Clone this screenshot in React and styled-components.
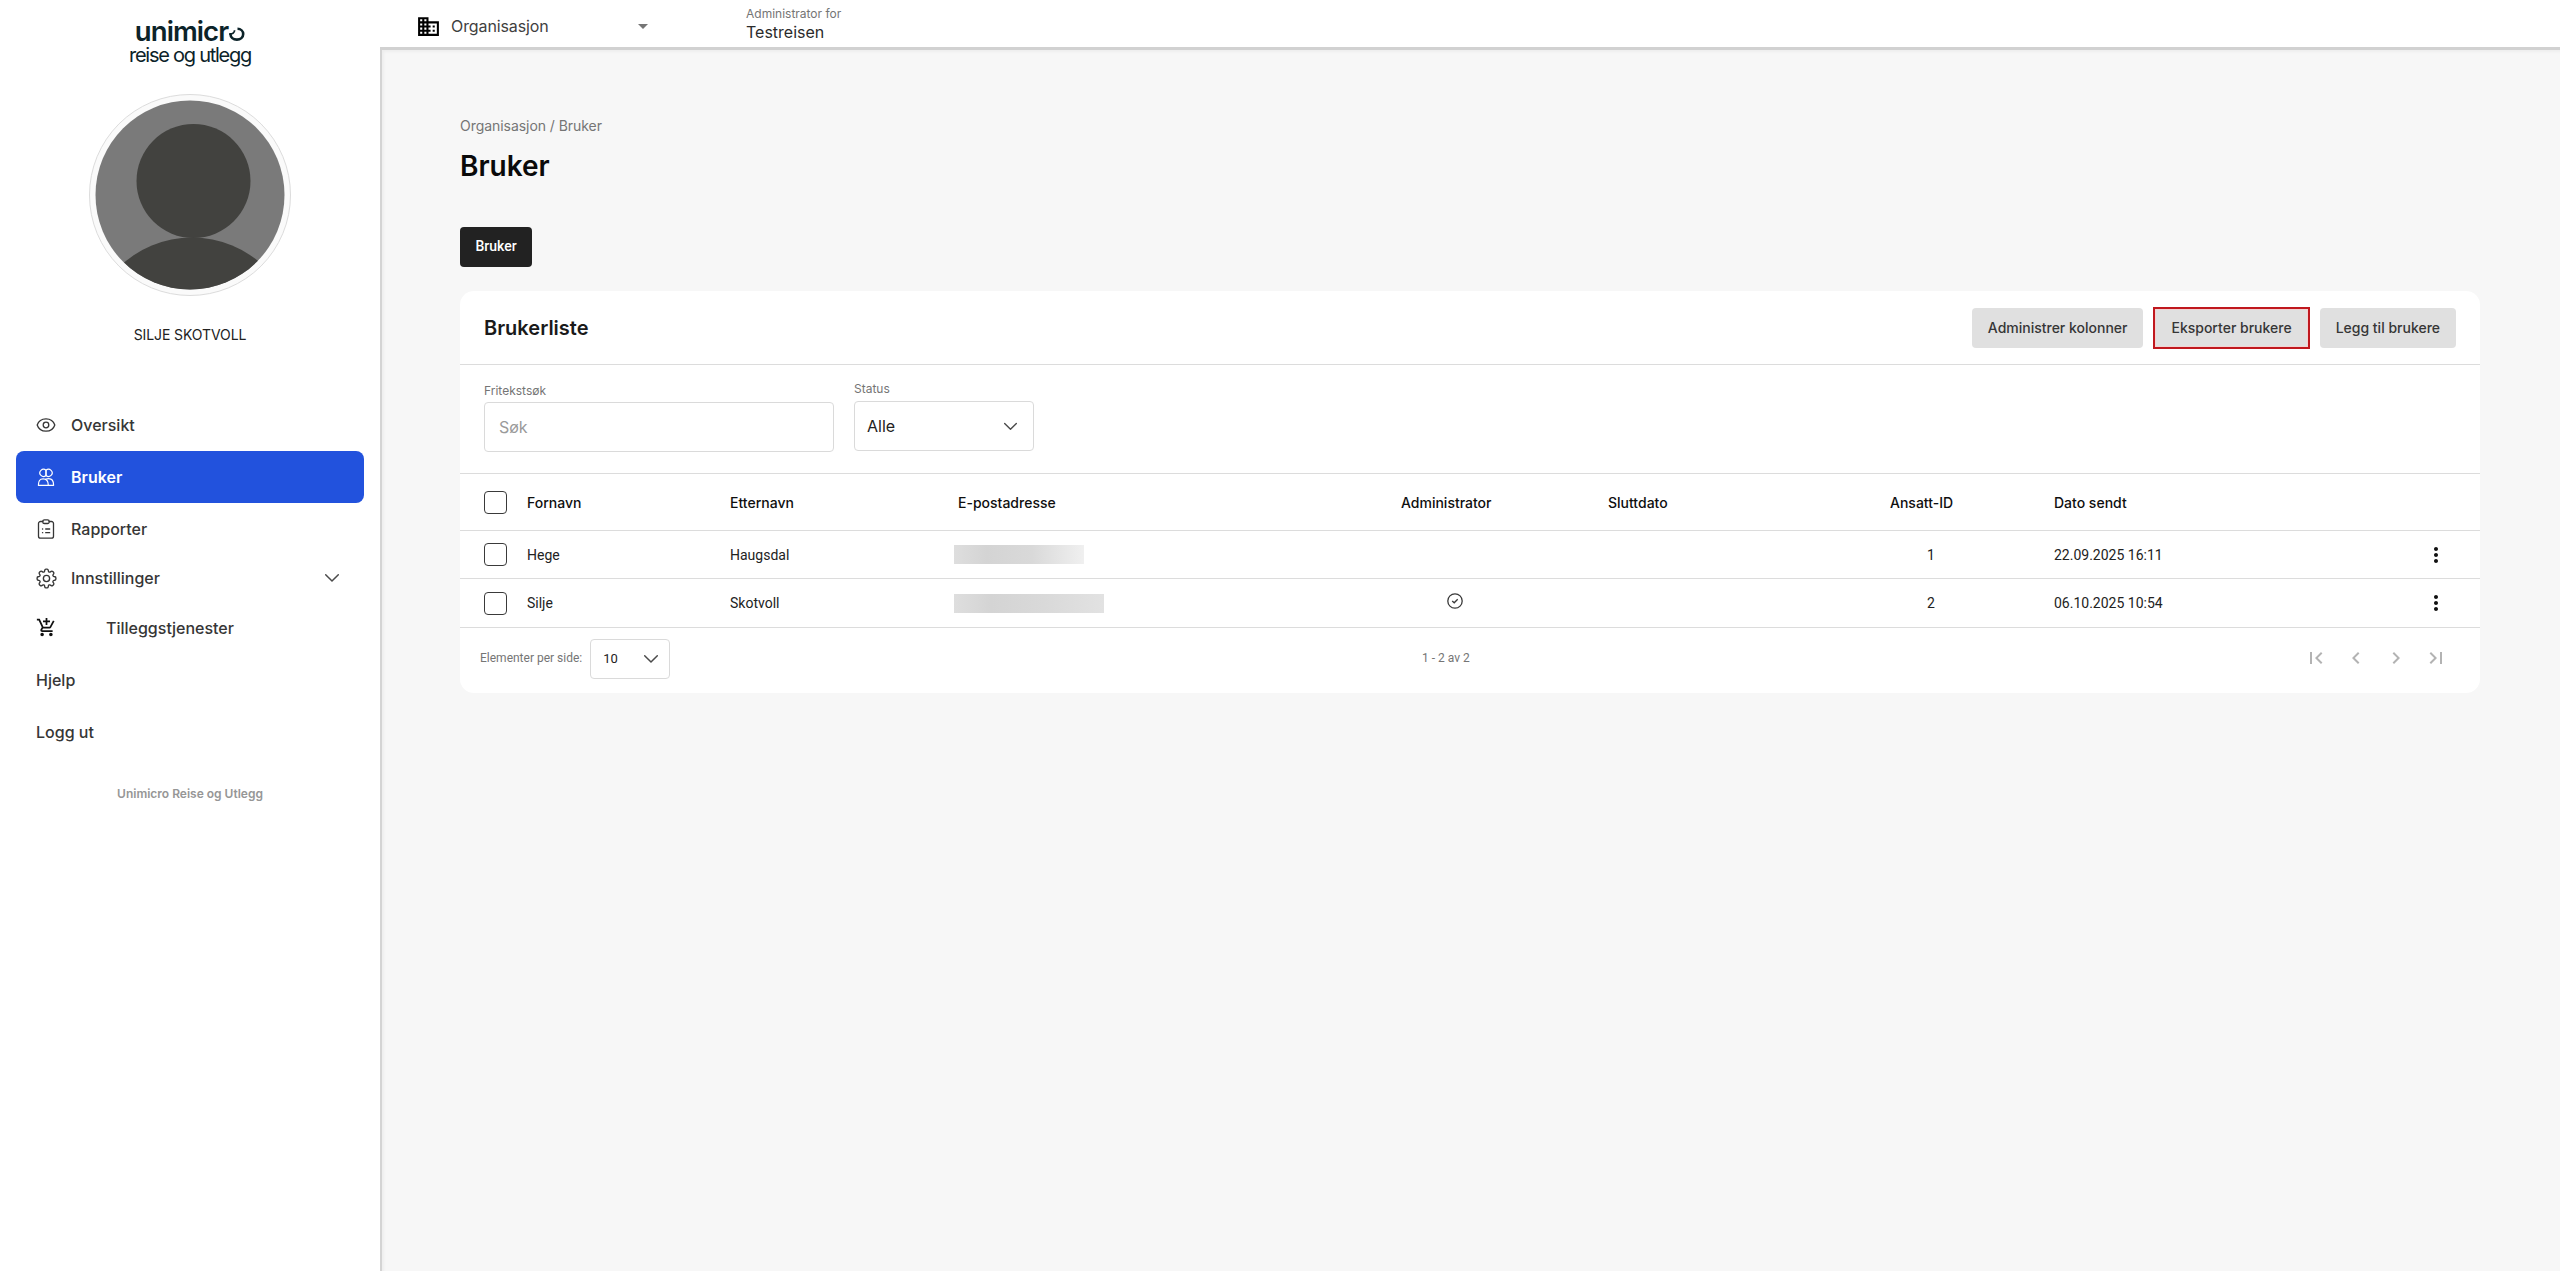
import React from 'react';
import styled, { createGlobalStyle } from 'styled-components';
import { HiOutlineCog8Tooth } from 'react-icons/hi2';
import {
  MdAddShoppingCart,
  MdBusiness,
  MdChevronLeft,
  MdChevronRight,
  MdFirstPage,
  MdLastPage,
  MdMoreVert,
} from 'react-icons/md';

const GlobalStyle = createGlobalStyle`
  * {
    box-sizing: border-box;
  }

  body {
    margin: 0;
    background: #f7f7f7;
    color: #2b2b2b;
    font-family: Inter, sans-serif;
    font-size: 14px;
  }

  svg {
    display: block;
    flex-shrink: 0;
  }
`;

const Page = styled.div`
  display: flex;
  height: 1271px;
`;

const Sidebar = styled.aside`
  display: flex;
  flex-direction: column;
  align-items: center;
  width: 380px;
  padding-top: 17px;
  background: #fff;
`;

const Logo = styled.div`
  display: flex;
  flex-direction: column;
  align-items: center;
  color: #0c2329;
`;

const LogoName = styled.div`
  display: flex;
  height: 26px;
  font-size: 27.5px;
  font-weight: 600;
  line-height: 28px;
  letter-spacing: -0.9px;
`;

const LogoProduct = styled.div`
  font-size: 20px;
  line-height: 24px;
  letter-spacing: -1.25px;
`;

const Avatar = styled.div`
  width: 202px;
  height: 202px;
  margin-top: 27px;
  padding: 5px;
  border: 1px solid #dcdcdc;
  border-radius: 50%;
  background: #fafafa;
`;

const UserName = styled.div`
  margin-top: 29px;
  color: #222;
  line-height: 20px;
  letter-spacing: -0.1px;
`;

const Nav = styled.nav`
  align-self: stretch;
  margin-top: 54px;
  padding: 0 16px;
`;

const NavItem = styled.a`
  display: flex;
  align-items: center;
  gap: 15px;
  height: ${({ $height }) => $height || 52}px;
  padding: 0 20px;
  border-radius: 8px;
  background: ${({ $active }) => ($active ? '#2252dd' : 'transparent')};
  color: ${({ $active }) => ($active ? '#fff' : '#363636')};
  font-size: 16px;
  font-weight: ${({ $active }) => ($active ? 600 : 500)};
`;

const NavIcon = styled.span`
  display: flex;
  justify-content: center;
  width: 20px;
  color: ${({ $dark }) => ($dark ? '#111' : 'inherit')};
`;

const NavLabel = styled.span`
  flex: 1;
  padding-left: ${({ $indent }) => $indent || 0}px;
`;

const NavToggle = styled.span`
  padding-right: 5px;
`;

const SidebarNote = styled.div`
  margin-top: 28px;
  color: #969696;
  font-size: 12px;
  font-weight: 600;
  line-height: 16px;
`;

const Main = styled.main`
  flex: 1;
  display: flex;
  flex-direction: column;
`;

const Topbar = styled.header`
  display: flex;
  align-items: flex-start;
  height: 50px;
  border-bottom: 3px solid #d1d1d1;
  background: #fff;
`;

const OrgSelect = styled.div`
  display: flex;
  align-items: center;
  width: 366px;
  height: 52px;
  padding-left: 36px;
  color: #3f3f3f;
  font-size: 16px;
`;

const OrgName = styled.span`
  width: 197px;
  padding-left: 10px;
  letter-spacing: -0.1px;
`;

const Caret = styled.span`
  border: 5px solid transparent;
  border-top-color: #757575;
  border-bottom-width: 0;
`;

const Client = styled.div`
  padding-top: 6px;
`;

const ClientLabel = styled.div`
  color: #757575;
  font-size: 12px;
  line-height: 16px;
`;

const ClientName = styled.div`
  color: #2b2b2b;
  font-size: 16px;
  line-height: 21px;
`;

const Content = styled.div`
  flex: 1;
  padding: 66px 80px 0 78px;
  border-left: 2px solid #d4d4d4;
  box-shadow: inset 3px 3px 3px -1px rgba(0, 0, 0, 0.04);
`;

const Breadcrumb = styled.div`
  color: #757575;
  line-height: 20px;
  letter-spacing: -0.05px;
`;

const Title = styled.h1`
  margin: 12px 0 43px;
  color: #0a0a0a;
  font-size: 28px;
  font-weight: 600;
  line-height: 36px;
`;

const Tab = styled.button`
  display: block;
  width: 72px;
  height: 40px;
  margin-bottom: 24px;
  padding: 0 0 2px;
  border: 0;
  border-radius: 4px;
  background: #222;
  color: #fff;
  font: 500 14px Roboto, sans-serif;
`;

const Card = styled.section`
  border-radius: 14px;
  background: #fff;
`;

const CardHeader = styled.div`
  display: flex;
  align-items: center;
  justify-content: space-between;
  height: 74px;
  padding: 0 24px;
  border-bottom: 1px solid #dcdcdc;
`;

const CardTitle = styled.h2`
  margin: 0;
  color: #1a1a1a;
  font-size: 20px;
  font-weight: 600;
`;

const Actions = styled.div`
  display: flex;
  gap: 12px;
`;

const ActionButton = styled.button`
  height: 40px;
  padding: 0 16px;
  border: 0;
  border-radius: 4px;
  background: #e0e0e0;
  color: #363636;
  font: 500 14px Inter, sans-serif;
  ${({ $marked }) => $marked && `
    height: 42px;
    margin: -1px -2px;
    padding: 0 16px;
    border: 2px solid #c0181e;
    border-radius: 0;
    box-shadow: inset 0 0 0 1px #f3d3d3;
  `}
`;

const Filters = styled.div`
  display: flex;
  align-items: flex-end;
  gap: 20px;
  height: 109px;
  padding: 0 24px 21px;
  border-bottom: 1px solid #dcdcdc;
`;

const Field = styled.label`
  width: ${({ $width }) => $width}px;
  margin-bottom: ${({ $raise }) => $raise || 0}px;
`;

const FieldLabel = styled.div`
  margin-bottom: ${({ $gap }) => $gap}px;
  color: #757575;
  font-size: 12px;
  line-height: 16px;
`;

const FieldBox = styled.div`
  display: flex;
  align-items: center;
  justify-content: space-between;
  height: 50px;
  padding: ${({ $select }) => ($select ? '0 16px 0 12px' : '0 14px')};
  border: 1px solid #dadada;
  border-radius: 4px;
  color: ${({ $select }) => ($select ? '#222' : '#9a9a9a')};
  font-size: 16px;
`;

const TableRow = styled.div`
  display: grid;
  grid-template-columns: 43px 203px 228px 443px 207px 282px 164px 1fr auto;
  align-items: center;
  height: ${({ $height }) => $height}px;
  padding: 0 32px 0 24px;
  border-bottom: 1px solid #dcdcdc;
  color: #222;
  font-family: ${({ $head }) => ($head ? 'Inter' : 'Roboto')}, sans-serif;
  font-weight: ${({ $head }) => ($head ? 500 : 400)};
`;

const HeadCell = styled.span`
  color: #0f0f0f;
`;

const Checkbox = styled.span`
  width: 23px;
  height: 23px;
  border: 1px solid #3a3a3a;
  border-radius: 4px;
`;

const MaskedEmail = styled.span`
  width: ${({ $width }) => $width}px;
  height: 19px;
  margin-left: -4px;
  background: linear-gradient(90deg, #dedede, #d4d4d4 25%, #d9d9d9 60%, ${({ $fade }) => $fade});
`;

const AdminCell = styled.span`
  padding: 0 0 4px 46px;
`;

const IdCell = styled.span`
  padding-left: 37px;
`;

const MenuButton = styled.span`
  display: flex;
  justify-content: center;
  width: 24px;
  color: #111;
`;

const Pager = styled.div`
  display: grid;
  grid-template-columns: 942px 1fr auto;
  align-items: center;
  height: 65px;
  padding: 0 32px 5px 20px;
  color: #757575;
  font: 400 12px Roboto, sans-serif;
`;

const PageSize = styled.div`
  display: flex;
  align-items: center;
  gap: 8px;
`;

const PageSizeBox = styled.span`
  display: flex;
  align-items: center;
  justify-content: space-between;
  width: 80px;
  height: 40px;
  margin-top: 2px;
  padding: 0 11px 0 12px;
  border: 1px solid #dadada;
  border-radius: 4px;
  color: #222;
`;

const PageSizeValue = styled.span`
  padding-bottom: 2px;
  font-size: 13px;
`;

const PageButtons = styled.div`
  display: flex;
  gap: 16px;
  color: #b3b3b3;
`;

const navStroke = {
  width: 20,
  height: 20,
  viewBox: '0 0 20 20',
  fill: 'none',
  stroke: 'currentColor',
  strokeWidth: 1.3,
  strokeLinecap: 'round',
  strokeLinejoin: 'round',
};

function EyeIcon() {
  return (
    <svg {...navStroke}>
      <path d="M1.2 10c1.300-4 4.700-6.200 8.800-6.200s7.500 2.200 8.800 6.200c-1.300 4-4.700 6.200-8.800 6.200S2.500 14 1.200 10z" />
      <circle cx="10" cy="10" r="2.800" />
    </svg>
  );
}

function UsersIcon() {
  return (
    <svg {...navStroke} strokeWidth="1.2">
      <path d="M10 3.300a3.600 3.600 0 1 0 0 5.200z" />
      <path d="M10 3.300a3.600 3.600 0 1 1 0 5.200z" />
      <path d="M2.400 18.300c0-4.200 1.300-6.500 4.700-6.500s5.200 2.300 5.200 6.500z" />
      <path d="M9.600 12.300c.9-.4 2-.6 3.200-.6 3.400 0 4.800 2.400 4.800 6.600h-5.300" />
    </svg>
  );
}

function ClipboardIcon() {
  return (
    <svg {...navStroke}>
      <path d="M6.800 2.500H4.500a2 2 0 0 0-2 2v12.700a2 2 0 0 0 2 2h11a2 2 0 0 0 2-2V4.500a2 2 0 0 0-2-2h-2.300" />
      <rect x="6.800" y=".8" width="6.400" height="3.700" rx="1.600" />
      <path d="M6.500 10h.2M9.700 10h4M6.500 13.700h.2M9.700 13.700h4" />
    </svg>
  );
}

function Chevron({ width = 14 }) {
  return (
    <svg width={width} height={width} viewBox="0 0 14 14" fill="none" stroke="#4a4a4a" strokeWidth="1.5">
      <path d="M.7 3.700L7 10l6.300-6.300" strokeLinecap="round" strokeLinejoin="round" />
    </svg>
  );
}

function CheckCircle() {
  return (
    <svg width="16" height="16" viewBox="0 0 16 16" fill="none" stroke="#3a3a3a" strokeWidth="1.3">
      <circle cx="8" cy="8" r="7.200" />
      <path d="M5.200 8l2 1.800 3.500-3.600" />
    </svg>
  );
}

function LogoSwirl() {
  return (
    <svg width="17" height="28" viewBox="0 0 17 28" fill="none" stroke="currentColor" strokeWidth="2.600">
      <path d="M9.500 11.800c3.300 0 5.700 2.300 5.700 5.300 0 3.200-2.700 5.500-6.300 5.500-3.800 0-6.400-2.300-6.500-5.800" />
      <path d="M1.200 16.800c3.200.3 5.200-.7 5.400-3.600" strokeWidth="1.800" />
    </svg>
  );
}

const users = [
  { first: 'Hege', last: 'Haugsdal', mail: 130, fade: '#f0f0f0', id: 1, sent: '22.09.2025 16:11', height: 48 },
  { first: 'Silje', last: 'Skotvoll', mail: 150, fade: '#e2e2e2', admin: true, id: 2, sent: '06.10.2025 10:54', height: 49 },
];

export default function App() {
  return (
    <Page>
      <GlobalStyle />
      <Sidebar>
        <Logo>
          <LogoName>
            unimicr
            <LogoSwirl />
          </LogoName>
          <LogoProduct>reise og utlegg</LogoProduct>
        </Logo>
        <Avatar>
          <svg width="190" height="190" viewBox="0 0 190 190">
            <clipPath id="avatar">
              <circle cx="95" cy="95" r="94.500" />
            </clipPath>
            <g clipPath="url(#avatar)">
              <rect width="190" height="190" fill="#7a7a7a" />
              <circle cx="98.500" cy="81" r="57" fill="#42423f" />
              <circle cx="97" cy="242.500" r="105" fill="#42423f" />
            </g>
          </svg>
        </Avatar>
        <UserName>SILJE SKOTVOLL</UserName>
        <Nav>
          <NavItem>
            <NavIcon><EyeIcon /></NavIcon>
            <NavLabel>Oversikt</NavLabel>
          </NavItem>
          <NavItem $active>
            <NavIcon><UsersIcon /></NavIcon>
            <NavLabel>Bruker</NavLabel>
          </NavItem>
          <NavItem>
            <NavIcon><ClipboardIcon /></NavIcon>
            <NavLabel>Rapporter</NavLabel>
          </NavItem>
          <NavItem $height={46}>
            <NavIcon><HiOutlineCog8Tooth size={25} strokeWidth={1.3} /></NavIcon>
            <NavLabel>Innstillinger</NavLabel>
            <NavToggle><Chevron /></NavToggle>
          </NavItem>
          <NavItem $height={53}>
            <NavIcon $dark><MdAddShoppingCart size={21} /></NavIcon>
            <NavLabel $indent={35}>Tilleggstjenester</NavLabel>
          </NavItem>
          <NavItem>Hjelp</NavItem>
          <NavItem>Logg ut</NavItem>
        </Nav>
        <SidebarNote>Unimicro Reise og Utlegg</SidebarNote>
      </Sidebar>

      <Main>
        <Topbar>
          <OrgSelect>
            <MdBusiness size={25} color="#000" />
            <OrgName>Organisasjon</OrgName>
            <Caret />
          </OrgSelect>
          <Client>
            <ClientLabel>Administrator for</ClientLabel>
            <ClientName>Testreisen</ClientName>
          </Client>
        </Topbar>

        <Content>
          <Breadcrumb>Organisasjon / Bruker</Breadcrumb>
          <Title>Bruker</Title>
          <Tab>Bruker</Tab>

          <Card>
            <CardHeader>
              <CardTitle>Brukerliste</CardTitle>
              <Actions>
                <ActionButton>Administrer kolonner</ActionButton>
                <ActionButton $marked>Eksporter brukere</ActionButton>
                <ActionButton>Legg til brukere</ActionButton>
              </Actions>
            </CardHeader>

            <Filters>
              <Field $width={350}>
                <FieldLabel $gap={3}>Fritekstsøk</FieldLabel>
                <FieldBox>Søk</FieldBox>
              </Field>
              <Field $width={180} $raise={1}>
                <FieldLabel $gap={4}>Status</FieldLabel>
                <FieldBox $select>
                  Alle
                  <Chevron width={13} />
                </FieldBox>
              </Field>
            </Filters>

            <TableRow $head $height={57}>
              <Checkbox />
              <HeadCell>Fornavn</HeadCell>
              <HeadCell>Etternavn</HeadCell>
              <HeadCell>E-postadresse</HeadCell>
              <HeadCell>Administrator</HeadCell>
              <HeadCell>Sluttdato</HeadCell>
              <HeadCell>Ansatt-ID</HeadCell>
              <HeadCell>Dato sendt</HeadCell>
            </TableRow>
            {users.map((user) => (
              <TableRow key={user.id} $height={user.height}>
                <Checkbox />
                <span>{user.first}</span>
                <span>{user.last}</span>
                <MaskedEmail $width={user.mail} $fade={user.fade} />
                <AdminCell>{user.admin && <CheckCircle />}</AdminCell>
                <span />
                <IdCell>{user.id}</IdCell>
                <span>{user.sent}</span>
                <MenuButton><MdMoreVert size={24} /></MenuButton>
              </TableRow>
            ))}

            <Pager>
              <PageSize>
                Elementer per side:
                <PageSizeBox>
                  <PageSizeValue>10</PageSizeValue>
                  <Chevron />
                </PageSizeBox>
              </PageSize>
              <span>1 - 2 av 2</span>
              <PageButtons>
                <MdFirstPage size={24} />
                <MdChevronLeft size={24} />
                <MdChevronRight size={24} />
                <MdLastPage size={24} />
              </PageButtons>
            </Pager>
          </Card>
        </Content>
      </Main>
    </Page>
  );
}
